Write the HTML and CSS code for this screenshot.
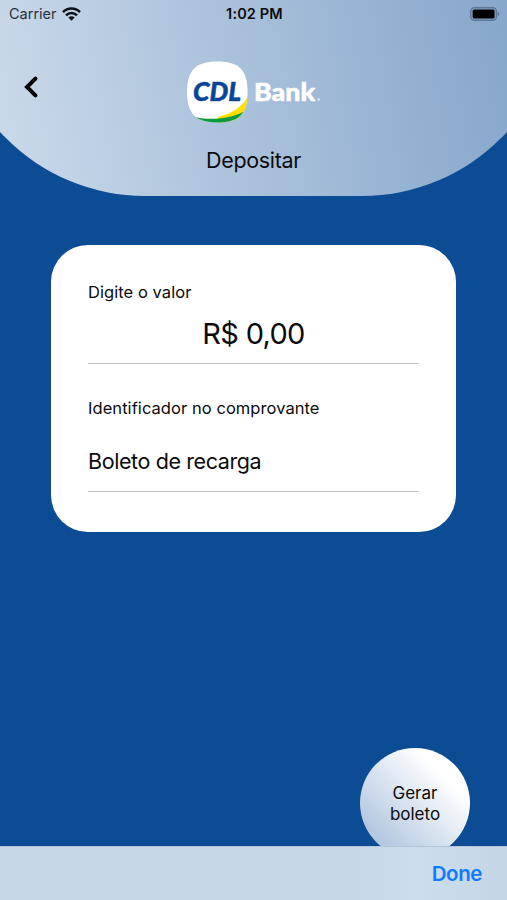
FILE: index.html
```
<!DOCTYPE html>
<html lang="pt-BR">
<head>
<meta charset="UTF-8">
<meta name="viewport" content="width=device-width, initial-scale=1.0">
<link rel="stylesheet" href="styles.css">
<title>CDL Bank - Depositar</title>
</head>
<body>
<div class="app">
    <header class="header">
        <div class="status-bar">
            <div class="carrier">
                <span>Carrier</span>
                <svg class="wifi" width="19" height="14" viewBox="0 0 19 14">
                    <path d="M1 5.1a12 12 0 0 1 17 0M4 8.3a7.8 7.8 0 0 1 11 0" fill="none" stroke="#0b1016" stroke-width="2.5"/>
                    <path d="M6.4 10.600a4.4 4.4 0 0 1 6.2 0L9.5 13.8z" fill="#0b1016"/>
                </svg>
            </div>
            <span class="time">1:02 PM</span>
            <svg class="battery" width="30" height="14" viewBox="0 0 30 14">
                <rect x="0.8" y="0.7" width="25.6" height="12.6" rx="3.6" fill="none" stroke="#5d7694" stroke-width="1.4"/>
                <rect x="2.6" y="2.4" width="22" height="9.2" rx="1.6" fill="#000"/>
                <path d="M27.6 4.6c2.2 1 2.2 3.8 0 4.8z" fill="#5d7694"/>
            </svg>
        </div>
        <div class="nav">
            <button class="back-btn" aria-label="Voltar">
                <svg width="14" height="22" viewBox="0 0 14 22">
                    <path d="M11.4 2.6L3 11l8.4 8.4" fill="none" stroke="#000" stroke-width="4" stroke-linecap="round"/>
                </svg>
            </button>
            <svg class="logo" width="136" height="62" viewBox="0 0 136 62">
                <defs>
                    <clipPath id="badge">
                        <path d="M31.5 0.5C53 0.5 61.5 9 61.5 31S53 61.5 31.5 61.5 1 53 1 31 10 0.5 31.5 0.5z"/>
                    </clipPath>
                </defs>
                <g clip-path="url(#badge)">
                    <rect width="62" height="62" fill="#fff"/>
                    <path d="M62 35.5C56 45 48 52 32 56V62H62z" fill="#ffdf00"/>
                    <path d="M8 56C27 60 47 57.500 62 48.500V62H8z" fill="#0a9b3c"/>
                </g>
                <text class="logo-cdl" x="7" y="39.8" textLength="48" lengthAdjust="spacingAndGlyphs">CDL</text>
                <text class="logo-bank" x="68" y="39.8" textLength="61" lengthAdjust="spacingAndGlyphs">Bank</text>
                <circle cx="132.7" cy="38.5" r="1.3" fill="#dfe9f4"/>
            </svg>
        </div>
        <h1>Depositar</h1>
    </header>
    <main class="card">
        <label class="label" for="valor">Digite o valor</label>
        <div class="value" id="valor">R$ 0,00</div>
        <label class="label label-id" for="identificador">Identificador no comprovante</label>
        <div class="identifier" id="identificador">Boleto de recarga</div>
    </main>
    <button class="generate-btn"><span>Gerar</span><span>boleto</span></button>
    <footer class="toolbar">
        <button class="done-btn">Done</button>
    </footer>
</div>
</body>
</html>
```

FILE: styles.css
```
* {
    box-sizing: border-box;
}

body {
    margin: 0;
    font-family: Inter, "Liberation Sans", sans-serif;
    background: #0c4c94;
    color: #0b0b0c;
}

button {
    border: none;
    padding: 0;
    font-family: inherit;
    color: inherit;
    background: none;
    cursor: pointer;
}

.app {
    height: 900px;
    display: flex;
    flex-direction: column;
    overflow: hidden;
}

/* wider than the screen so the round corners are cut at the sides */
.header {
    flex: none;
    align-self: center;
    width: 609px;
    height: 196px;
    padding: 0 51px;
    border-radius: 0 0 196px 196px;
    background: linear-gradient(80deg, #cbdaea 8%, #b2c7de 38%, #87a7cc 91%);
}

.status-bar {
    display: grid;
    grid-template-columns: 1fr auto 1fr;
    align-items: center;
    height: 27px;
    padding: 0 7px 0 9px;
    font-size: 14.5px;
}

.carrier {
    display: flex;
    align-items: center;
    gap: 5px;
    color: #27323d;
}

.time {
    font-weight: 600;
    letter-spacing: 0.15px;
}

.battery {
    justify-self: end;
}

.nav {
    display: grid;
    grid-template-columns: 1fr auto 1fr;
    height: 95px;
    padding-top: 34px;
}

.back-btn {
    justify-self: start;
    align-self: start;
    height: 22px;
    margin: 15px 0 0 24px;
}

.back-btn svg,
.logo {
    display: block;
}

.logo-cdl,
.logo-bank {
    font-family: Lato, Inter, sans-serif;
    font-weight: 900;
    font-size: 26px;
    stroke-width: 0.5px;
    stroke-linejoin: round;
}

.logo-cdl {
    font-style: italic;
    fill: #0b4595;
    stroke: #0b4595;
}

.logo-bank {
    font-size: 25px;
    fill: #fff;
    stroke: #fff;
}

h1 {
    margin: 24px 0 0;
    font-size: 21.5px;
    font-weight: 400;
    line-height: 28px;
    letter-spacing: -0.35px;
    text-align: center;
}

.card {
    flex: none;
    width: 405px;
    height: 287px;
    margin: 49px 0 0 51px;
    padding: 37px;
    border-radius: 37px;
    background: #fff;
}

.label {
    display: block;
    font-size: 16.5px;
    line-height: 20px;
    letter-spacing: 0.06px;
}

.value {
    height: 62px;
    padding-top: 14px;
    border-bottom: 1px solid #c4c4c6;
    font-size: 29px;
    line-height: 36px;
    letter-spacing: -0.7px;
    text-align: center;
}

.label-id {
    margin-top: 34px;
}

.identifier {
    height: 74px;
    padding-top: 29px;
    border-bottom: 1px solid #c4c4c6;
    font-size: 21.5px;
    line-height: 28px;
    letter-spacing: -0.4px;
}

.generate-btn {
    flex: none;
    display: flex;
    flex-direction: column;
    align-items: center;
    justify-content: center;
    align-self: flex-end;
    width: 110px;
    height: 110px;
    margin: 216px 37px -12px 0;
    padding-top: 2px;
    border-radius: 50%;
    background: linear-gradient(45deg, #9db8d8, #fff 76%);
    font-size: 17px;
    line-height: 21px;
}

.toolbar {
    flex: none;
    display: flex;
    align-items: center;
    justify-content: flex-end;
    position: relative;
    height: 54px;
    padding-right: 25px;
    border-top: 1px solid #b4c4d4;
    background: linear-gradient(90deg, #c6d7e8 70%, #ccdded 82%, #c4d5e6);
}

.done-btn {
    color: #107bfa;
    font-size: 20.5px;
    font-weight: 600;
    letter-spacing: -0.4px;
}
```
